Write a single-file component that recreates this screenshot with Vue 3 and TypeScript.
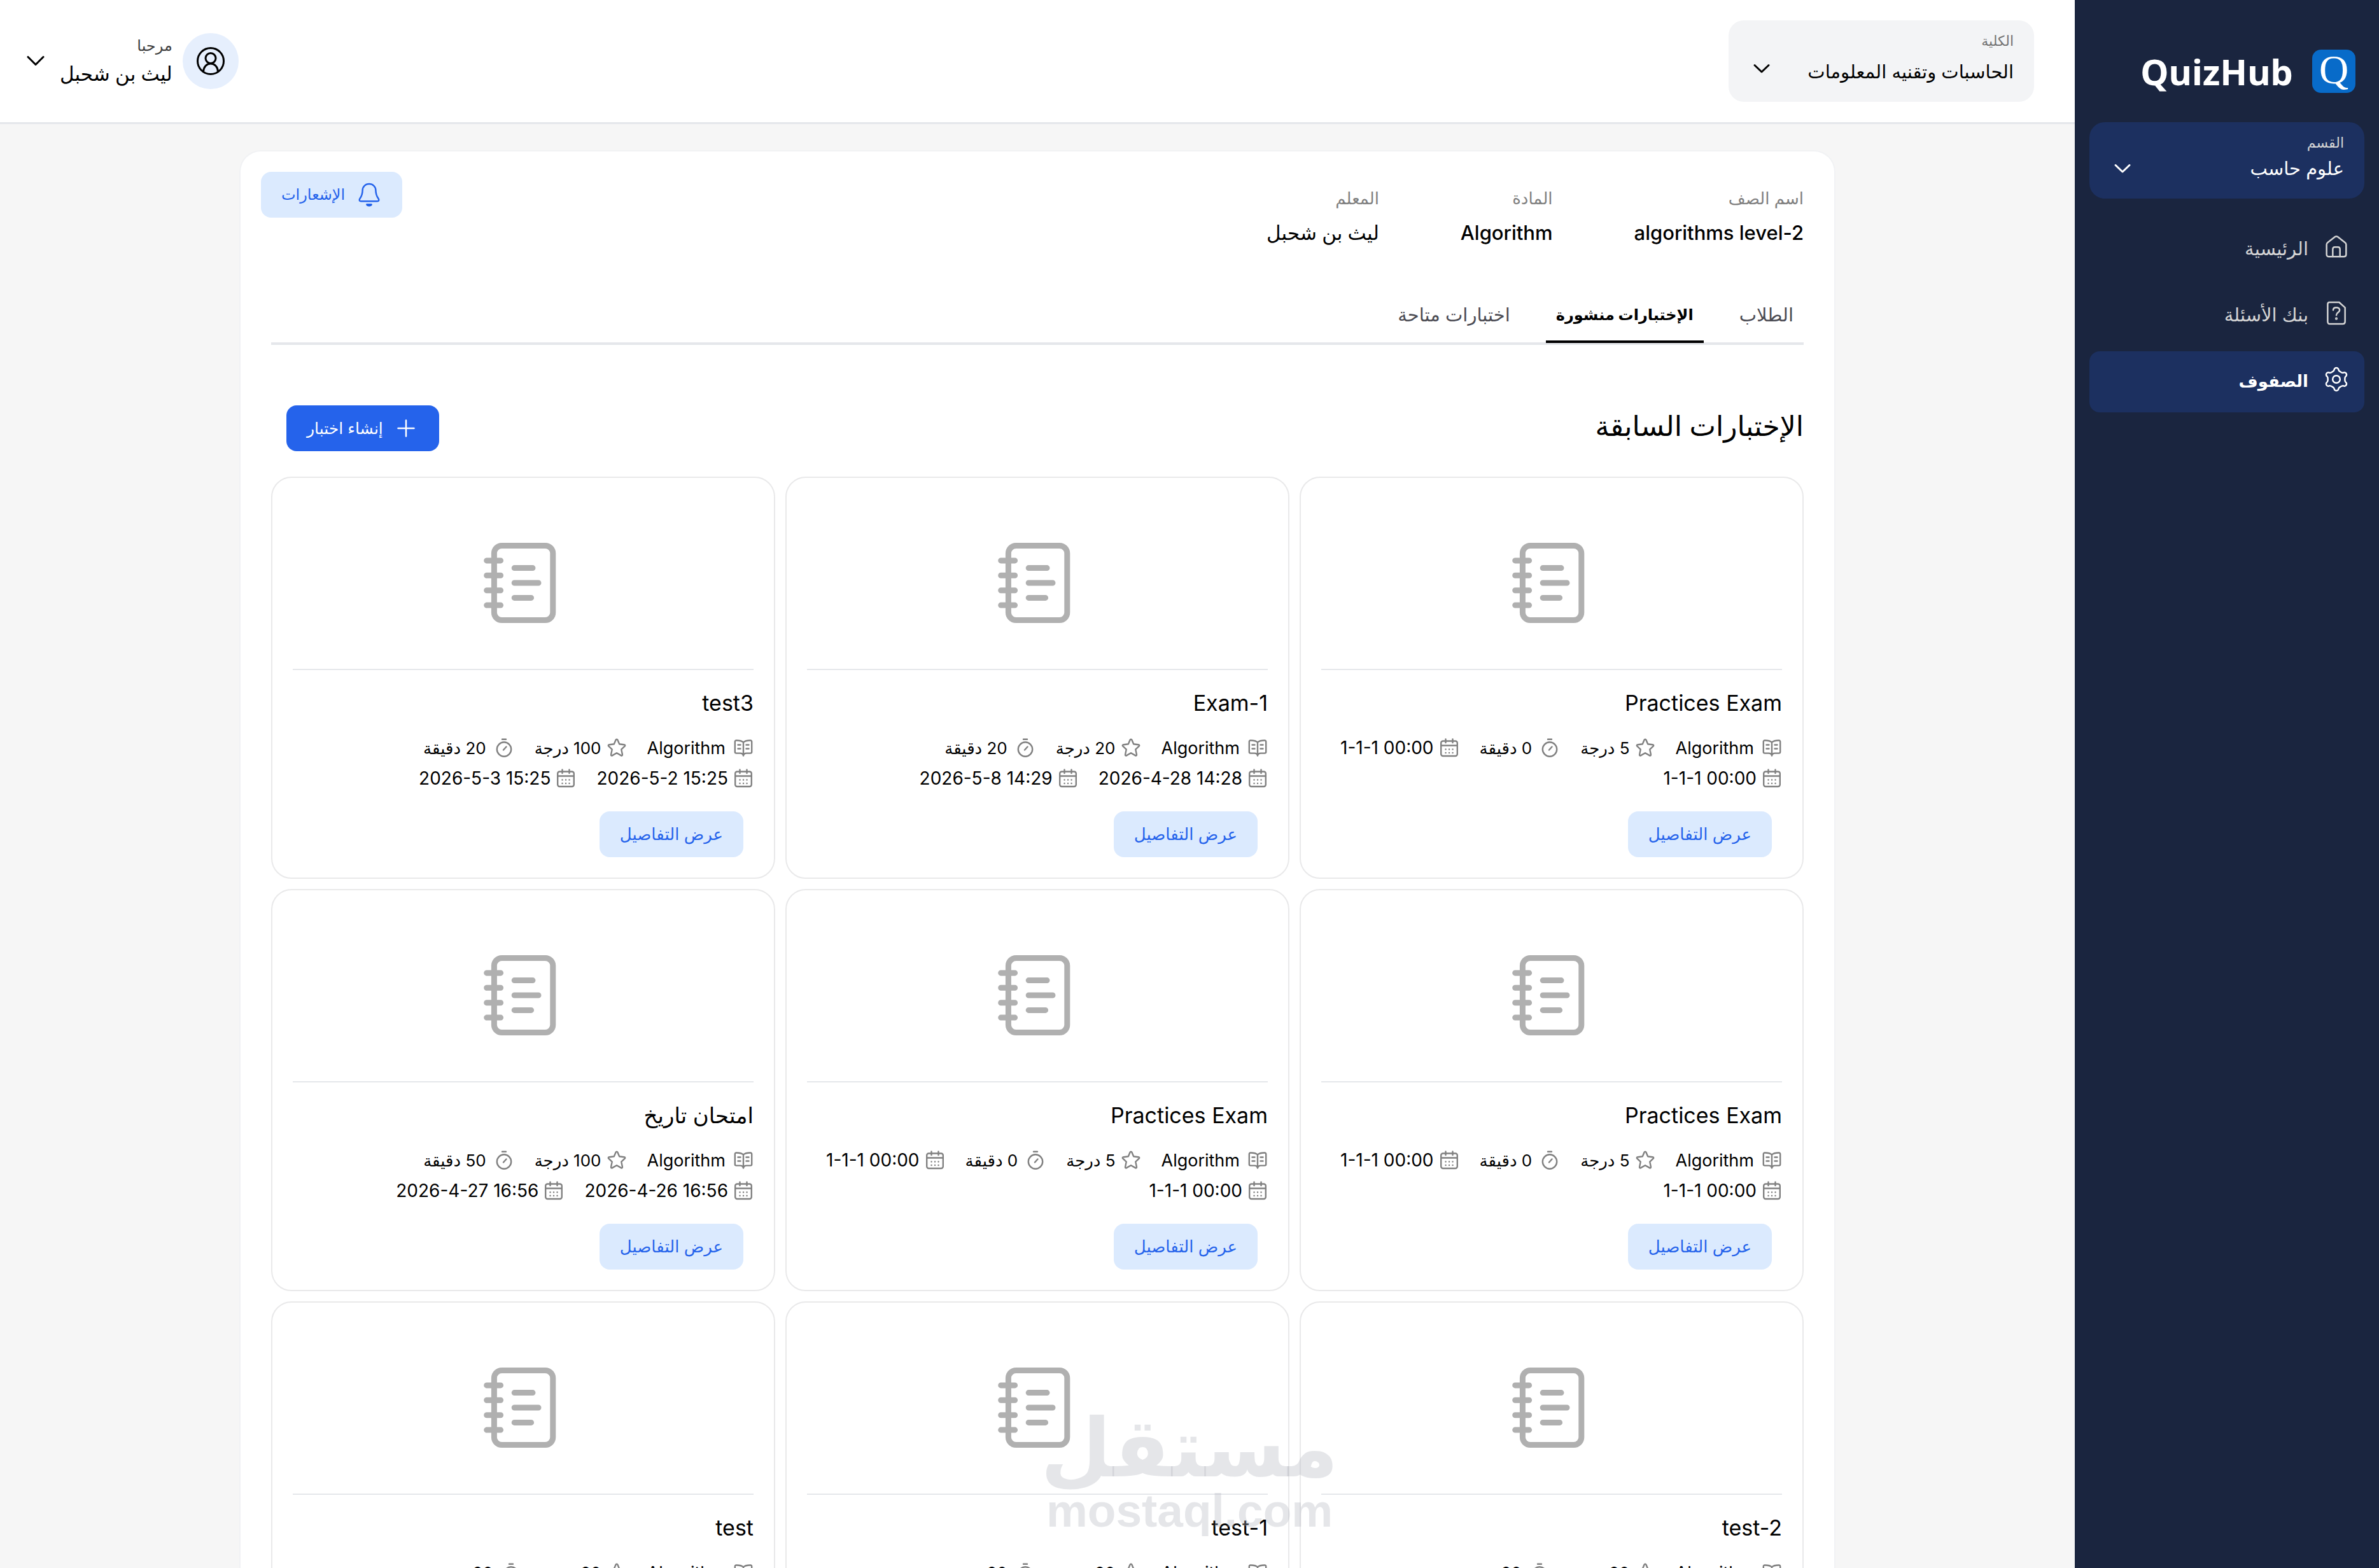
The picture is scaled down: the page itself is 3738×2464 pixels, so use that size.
<script setup lang="ts">
import { ref } from 'vue'

interface Exam {
  title: string
  grade: number
  minutes: number
  start: string
  end: string
}

const faculty = ref('الحاسبات وتقنيه المعلومات')
const department = ref('علوم حاسب')
const activeTab = ref(1)

const tabs: string[] = ['الطلاب', 'الإختبارات منشورة', 'اختبارات متاحة']

const info = [
  { label: 'اسم الصف', value: 'algorithms level-2' },
  { label: 'المادة', value: 'Algorithm' },
  { label: 'المعلم', value: 'ليث بن شحبل' },
]

const exams: Exam[] = [
  { title: 'Practices Exam', grade: 5, minutes: 0, start: '1-1-1 00:00', end: '1-1-1 00:00' },
  { title: 'Exam-1', grade: 20, minutes: 20, start: '2026-4-28 14:28', end: '2026-5-8 14:29' },
  { title: 'test3', grade: 100, minutes: 20, start: '2026-5-2 15:25', end: '2026-5-3 15:25' },
  { title: 'Practices Exam', grade: 5, minutes: 0, start: '1-1-1 00:00', end: '1-1-1 00:00' },
  { title: 'Practices Exam', grade: 5, minutes: 0, start: '1-1-1 00:00', end: '1-1-1 00:00' },
  { title: 'امتحان تاريخ', grade: 100, minutes: 50, start: '2026-4-26 16:56', end: '2026-4-27 16:56' },
  { title: 'test-2', grade: 20, minutes: 20, start: '2026-4-26 16:56', end: '2026-4-27 16:56' },
  { title: 'test-1', grade: 20, minutes: 20, start: '2026-4-26 16:56', end: '2026-4-27 16:56' },
  { title: 'test', grade: 20, minutes: 20, start: '2026-4-26 16:56', end: '2026-4-27 16:56' },
]

const isLatin = (text: string): boolean => /^[\x20-\x7e]+$/.test(text)

// Six rounded lobes around the centre of a 24-unit box.
function gearPath(): string {
  const at = (deg: number, u: number, v: number): string => {
    const a = (deg * Math.PI) / 180
    const x = 12 + u * Math.sin(a) + v * Math.cos(a)
    const y = 12 - u * Math.cos(a) + v * Math.sin(a)
    return `${x.toFixed(2)} ${y.toFixed(2)}`
  }
  let d = `M${at(0, 6.93, -4)}`
  for (let deg = 0; deg < 360; deg += 60) {
    d += `Q${at(deg, 7.85, -2.3)} ${at(deg, 8.7, -2.1)}`
    d += `A2.1 2.1 0 0 1 ${at(deg, 8.7, 2.1)}`
    d += `Q${at(deg, 7.85, 2.3)} ${at(deg, 6.93, 4)}`
  }
  return d + 'Z'
}
const gear = gearPath()
</script>

<template>
  <div class="app" dir="rtl" lang="ar">
    <aside class="sidebar">
      <div class="brand">
        <span class="brand-mark">Q</span>
        <span class="brand-name">QuizHub</span>
      </div>

      <div class="picker picker-dark">
        <label for="department">القسم</label>
        <select id="department" v-model="department">
          <option>علوم حاسب</option>
        </select>
        <svg class="chevron" viewBox="0 0 28 16"><path d="M3 2.500 14 13 25 2.500" /></svg>
      </div>

      <nav class="menu">
        <a href="#home" class="menu-item">
          <svg class="icon" viewBox="0 0 24 24">
            <path d="M2.800 9.800C2.800 8.900 3.200 8.300 3.900 7.800L10.600 2.600C11.500 1.900 12.500 1.900 13.400 2.600L20.100 7.800C20.800 8.300 21.200 8.900 21.200 9.800V19C21.200 20.400 20.400 21.200 19 21.200H5C3.600 21.200 2.800 20.400 2.800 19Z" />
            <path d="M8.600 21V14.200C8.600 13 9.300 12.200 10.500 12.200H13.500C14.700 12.200 15.400 13 15.400 14.200V21" />
          </svg>
          <span>الرئيسية</span>
        </a>
        <a href="#questions" class="menu-item">
          <svg class="icon" viewBox="0 0 24 24">
            <path d="M5.400 1.800H14.600L20.200 6.800V20C20.200 21.400 19.500 22.200 18.200 22.200H5.800C4.500 22.200 3.800 21.400 3.800 20V3.800C3.800 2.600 4.300 1.800 5.400 1.800Z" />
            <path d="M9 9.200C9 7.600 10.300 6.700 12 6.700S15.100 7.700 15.100 9.200C15.100 11.500 12 11.400 12 13.900" />
            <circle cx="12" cy="17.200" r=".5" />
          </svg>
          <span>بنك الأسئلة</span>
        </a>
        <a href="#classes" class="menu-item active">
          <svg class="icon" viewBox="0 0 24 24">
            <path :d="gear" />
            <circle cx="12" cy="12" r="3.500" />
          </svg>
          <span>الصفوف</span>
        </a>
      </nav>
    </aside>

    <div class="page">
      <header class="topbar">
        <div class="picker picker-light">
          <label for="faculty">الكلية</label>
          <select id="faculty" v-model="faculty">
            <option>الحاسبات وتقنيه المعلومات</option>
          </select>
          <svg class="chevron" viewBox="0 0 28 16"><path d="M3 2.500 14 13 25 2.500" /></svg>
        </div>

        <button type="button" class="account">
          <span class="avatar">
            <svg viewBox="0 0 48 48">
              <circle cx="24" cy="24" r="20.500" />
              <circle cx="24" cy="19.500" r="8" />
              <path d="M12.500 40.500C13 33 17.500 28 24 28S35 33 35.500 40.500" />
            </svg>
          </span>
          <span class="account-text">
            <span class="greeting">مرحبا</span>
            <span class="user-name">ليث بن شحبل</span>
          </span>
          <svg class="chevron" viewBox="0 0 28 16"><path d="M2 1.500 14 13.500 26 1.500" /></svg>
        </button>
      </header>

      <main class="content">
        <section class="panel">
          <div class="summary">
            <dl class="facts">
              <div v-for="fact in info" :key="fact.label">
                <dt>{{ fact.label }}</dt>
                <dd>{{ fact.value }}</dd>
              </div>
            </dl>
            <button type="button" class="btn btn-soft">
              <svg class="icon" viewBox="0 0 24 24">
                <path d="M12 1.800C8.500 1.800 5.900 4.300 5.800 7.700C5.700 11.500 5 13.400 3.400 15.400C2.300 16.900 2.700 18.200 4.500 18.200H19.500C21.300 18.200 21.700 16.900 20.600 15.400C19 13.400 18.300 11.500 18.200 7.700C18.100 4.300 15.500 1.800 12 1.800Z" />
                <path d="M9.800 21.200C10.400 22.700 13.600 22.700 14.200 21.200Z" />
              </svg>
              <span>الإشعارات</span>
            </button>
          </div>

          <div class="tabs" role="tablist">
            <button
              v-for="(tab, i) in tabs"
              :key="tab"
              type="button"
              role="tab"
              class="tab"
              :class="{ active: i === activeTab }"
              :aria-selected="i === activeTab"
              @click="activeTab = i"
            >
              {{ tab }}
            </button>
          </div>

          <div class="section-head">
            <h1>الإختبارات السابقة</h1>
            <button type="button" class="btn btn-primary">
              <svg class="icon" viewBox="0 0 24 24"><path d="M12 4.500V19.500M4.500 12H19.500" /></svg>
              <span>إنشاء اختبار</span>
            </button>
          </div>

          <div class="cards">
            <article v-for="(exam, i) in exams" :key="i" class="card">
              <div class="cover">
                <svg viewBox="0 0 24 24">
                  <rect x="4.400" y="2.250" width="15.400" height="19.500" rx="2" />
                  <path d="M2.450 6.150H6.100M2.450 10.050H6.100M2.450 13.950H6.100M2.450 17.850H6.100" />
                  <path d="M9.700 8.100H14.500M9.700 12H16M9.700 15.900H14.100" />
                </svg>
              </div>
              <h2 :dir="isLatin(exam.title) ? 'ltr' : 'rtl'">{{ exam.title }}</h2>
              <ul class="meta">
                <li class="wide">
                  <svg viewBox="0 0 32 32">
                    <path d="M16 7.500C13.500 5 10 4.500 5 4.500C3.500 4.500 2.800 5.200 2.800 6.500V22.500C2.800 24 3.500 24.600 5 24.600H11C14 24.600 15.500 25.500 16 28.500C16.500 25.500 18 24.600 21 24.600H27C28.500 24.600 29.200 24 29.200 22.500V6.500C29.200 5.200 28.500 4.500 27 4.500C22 4.500 18.500 5 16 7.500ZM16 7.500V27" />
                    <path d="M7.500 11.500H11.500M7.500 17.500H11.500M20.500 11.500H24.500M20.500 17.500H24.500" />
                  </svg>
                  <span class="subject">Algorithm</span>
                </li>
                <li>
                  <svg viewBox="0 0 32 32">
                    <path d="M14.700 3.600C15.300 2.300 16.700 2.300 17.300 3.600L20.200 10.300L27.700 11.200C29.300 11.400 29.700 12.600 28.600 13.700L23.300 18.700L24.900 26.600C25.200 28.200 24.200 28.900 22.800 28.100L16 24.300L9.200 28.100C7.800 28.900 6.800 28.200 7.100 26.600L8.700 18.700L3.400 13.700C2.300 12.600 2.700 11.400 4.300 11.200L11.800 10.300Z" />
                  </svg>
                  <span>{{ exam.grade }} درجة</span>
                </li>
                <li class="wide">
                  <svg viewBox="0 0 32 32">
                    <circle cx="16" cy="18.500" r="11.200" />
                    <path d="M13 2.800H19M15 19.500 19.500 14.500" />
                  </svg>
                  <span>{{ exam.minutes }} دقيقة</span>
                </li>
                <li v-for="(date, d) in [exam.start, exam.end]" :key="d">
                  <svg viewBox="0 0 32 32">
                    <rect x="3.200" y="5.500" width="25.600" height="23.500" rx="3" />
                    <path d="M3.200 12.500H28.800M10.500 2.500V8M21.500 2.500V8" />
                    <path d="M10.500 18.500H10.600M16 18.500H16.100M21.500 18.500H21.600M10.500 24H10.600M16 24H16.100M21.500 24H21.600" />
                  </svg>
                  <time dir="ltr">{{ date }}</time>
                </li>
              </ul>
              <button type="button" class="btn btn-soft details">عرض التفاصيل</button>
            </article>
          </div>
        </section>
      </main>
    </div>

    <div class="watermark">
      <span class="watermark-ar">مستقل</span>
      <span class="watermark-en" dir="ltr">mostaql.com</span>
    </div>
  </div>
</template>

<style>
body {
  margin: 0;
  background: #f6f6f6;
}
</style>

<style scoped>
.app {
  position: relative;
  display: flex;
  height: 100vh;
  overflow: hidden;
  font-family: Inter, "DejaVu Sans", sans-serif;
  font-size: 28px;
  color: #000;
}

.app * {
  box-sizing: border-box;
}

button,
select {
  margin: 0;
  font: inherit;
  color: inherit;
}

svg {
  flex: none;
  fill: none;
  stroke: currentColor;
  stroke-linecap: round;
  stroke-linejoin: round;
}

.icon {
  width: 40px;
  height: 40px;
  stroke-width: 1.5;
}

.chevron {
  width: 28px;
  height: 16px;
  stroke-width: 3;
}

/* Sidebar */
.sidebar {
  flex: none;
  width: 478px;
  padding: 78px 23px 0;
  background: #1a253f;
  color: #fff;
}

.brand {
  display: flex;
  align-items: center;
  gap: 30px;
  height: 68px;
  margin: 0 14px 46px;
}

.brand-mark {
  width: 68px;
  height: 68px;
  border-radius: 14px;
  background: #086bc9;
  font-family: "Liberation Serif", serif;
  font-size: 64px;
  line-height: 64px;
  text-align: center;
}

.brand-name {
  font-family: "Noto Sans", sans-serif;
  font-size: 56px;
  font-weight: 700;
  line-height: 64px;
}

.picker {
  position: relative;
  display: flex;
  flex-direction: column;
  border-radius: 24px;
}

.picker select {
  width: 100%;
  padding: 0;
  border: 0;
  outline: 0;
  appearance: none;
  background: transparent;
  font-size: 29px;
}

.picker .chevron {
  position: absolute;
  pointer-events: none;
}

.picker-dark {
  height: 120px;
  padding: 16px 32px;
  background: #1c3060;
}

.picker-dark label {
  font-size: 22px;
  line-height: 32px;
  color: #d4d4d4;
}

.picker-dark select {
  height: 48px;
}

.picker-dark .chevron {
  left: 38px;
  bottom: 39px;
}

.menu {
  display: flex;
  flex-direction: column;
  gap: 8px;
  margin-top: 32px;
}

.menu-item {
  display: flex;
  align-items: center;
  gap: 24px;
  height: 96px;
  padding: 0 24px 4px;
  border-radius: 16px;
  color: #d4d4d4;
  font-size: 29px;
  text-decoration: none;
}

.menu-item .icon {
  margin-bottom: 4px;
}

.menu-item.active {
  background: #1c3060;
  color: #fff;
  font-size: 26px;
  font-weight: 700;
}

/* Top bar */
.page {
  flex: 1;
  min-width: 0;
  display: flex;
  flex-direction: column;
}

.topbar {
  flex: none;
  display: flex;
  align-items: center;
  justify-content: space-between;
  padding: 32px 64px 32px 42px;
  border-bottom: 3px solid #e5e7eb;
  background: #fff;
}

.picker-light {
  width: 480px;
  height: 128px;
  padding: 16px 32px;
  background: #f3f4f6;
}

.picker-light label {
  font-size: 22px;
  line-height: 32px;
  color: #737373;
}

.picker-light select {
  height: 64px;
}

.picker-light .chevron {
  left: 38px;
  bottom: 44px;
}

.account {
  display: flex;
  align-items: center;
  padding: 0;
  border: 0;
  background: none;
  text-align: start;
}

.avatar {
  display: flex;
  align-items: center;
  justify-content: center;
  width: 88px;
  height: 88px;
  margin-left: 16px;
  border-radius: 50%;
  background: #e6effd;
}

.avatar svg {
  width: 48px;
  height: 48px;
  stroke-width: 3;
}

.account-text {
  display: flex;
  flex-direction: column;
}

.account .chevron {
  margin-right: 24px;
}

.greeting {
  font-size: 24px;
  line-height: 40px;
  color: #404040;
}

.user-name {
  font-size: 31px;
  font-weight: 500;
  line-height: 48px;
}

/* Panel */
.content {
  flex: 1;
  min-height: 0;
  overflow: hidden;
  padding: 43px 48px;
}

.panel {
  max-width: 2504px;
  margin: 0 auto;
  padding: 32px;
  border-radius: 32px;
  background: #fff;
  box-shadow: 0 0 0 2px #f1f2f4;
}

.summary {
  display: flex;
  align-items: flex-start;
  justify-content: space-between;
  padding-right: 16px;
}

.facts {
  display: flex;
  gap: 128px;
  margin: 22px 0 0;
}

.facts dt {
  font-size: 26px;
  line-height: 40px;
  color: #808080;
}

.facts dd {
  margin: 14px 0 0;
  font-size: 31px;
  font-weight: 500;
  line-height: 40px;
}

.btn {
  display: flex;
  align-items: center;
  gap: 18px;
  height: 72px;
  padding: 0 32px;
  border: 0;
  border-radius: 16px;
  font-size: 26px;
  line-height: 40px;
}

.btn-soft {
  background: #dbeafe;
  color: #2563eb;
}

.btn-primary {
  gap: 16px;
  background: #2563eb;
  color: #fff;
  font-size: 25px;
}

.summary .btn {
  font-size: 24px;
}

.tabs {
  display: flex;
  gap: 40px;
  margin: 69px 16px 0;
  border-bottom: 4px solid #e5e7eb;
}

.tab {
  height: 84px;
  margin-bottom: -1px;
  padding: 0 16px;
  border: 0;
  border-bottom: 4px solid transparent;
  background: none;
  font-size: 29px;
  line-height: 48px;
  color: #4b4b53;
}

.tab.active {
  border-color: #000;
  color: #000;
  font-size: 24px;
  font-weight: 700;
}

.section-head {
  display: flex;
  align-items: flex-start;
  justify-content: space-between;
  margin: 95px 16px 40px 40px;
}

h1 {
  margin: 0;
  font-size: 44px;
  font-weight: 500;
  line-height: 64px;
}

.cards {
  display: grid;
  grid-template-columns: repeat(3, minmax(0, 1fr));
  gap: 16px;
  margin: 0 16px;
}

.card {
  display: flex;
  flex-direction: column;
  align-items: stretch;
  height: 632px;
  padding: 32px;
  border: 2px solid #e9e9ea;
  border-radius: 32px;
}

.cover {
  display: flex;
  justify-content: center;
  height: 270px;
  padding-top: 61px;
  border-bottom: 2px solid #e5e7eb;
  color: #b0b0b0;
}

.cover svg {
  width: 144px;
  height: 144px;
  stroke-width: 1.5;
}

h2 {
  margin: 24px 0 0;
  font-size: 34px;
  font-weight: 400;
  line-height: 56px;
  text-align: right;
}

.meta {
  display: flex;
  flex-wrap: wrap;
  column-gap: 32px;
  margin: 18px 0 0;
  padding: 0;
  list-style: none;
}

.meta li {
  display: flex;
  align-items: center;
  gap: 8px;
  height: 48px;
  font-size: 26px;
}

.meta li.wide {
  gap: 12px;
}

.meta .subject {
  font-size: 27px;
}

.meta time {
  font-size: 28px;
}

.meta svg {
  width: 32px;
  height: 32px;
  stroke-width: 2.4;
  color: #808080;
}

.details {
  align-self: flex-start;
  margin: auto 16px 0 0;
}

/* Watermark laid over the lower middle of the window */
.watermark {
  position: absolute;
  right: 0;
  bottom: 50px;
  left: 0;
  display: flex;
  flex-direction: column;
  align-items: center;
  color: rgba(178, 182, 190, 0.34);
  font-weight: 700;
  pointer-events: none;
}

.watermark-ar {
  font-size: 128px;
  line-height: 120px;
}

.watermark-en {
  font-family: "Liberation Sans", sans-serif;
  font-size: 73px;
  line-height: 80px;
}
</style>
